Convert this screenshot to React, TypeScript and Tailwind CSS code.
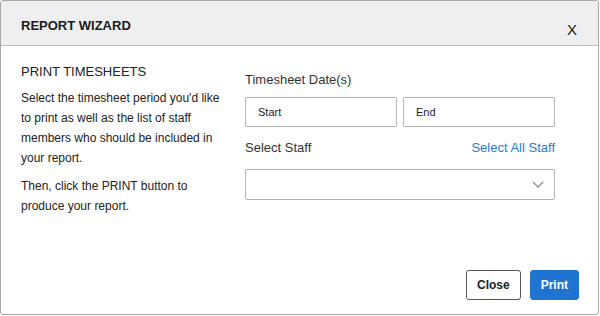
import React from 'react';

const font = { fontFamily: '"Liberation Sans", Arial, sans-serif' };

const DateBox: React.FC<{ label: string }> = ({ label }) => (
  <div className="flex-1 h-[30px] border border-[#b4b4b4] rounded-[2px] flex items-center pl-[12px] text-[11px] text-[#222]">
    {label}
  </div>
);

const App: React.FC = () => {
  return (
    <div className="w-[600px] h-[316px] bg-white" style={font}>
      <div className="w-[599px] h-[315px] border border-[#a9a9a9] rounded-[3px] flex flex-col overflow-hidden">
        {/* Header */}
        <div className="h-[45px] bg-[#efeff1] border-b border-[#bcbcbc] flex items-start justify-between pl-[20px] pr-[21px] pt-[17px] shrink-0">
          <span className="text-[13px] leading-[15px] font-bold text-[#1a1a1a]">REPORT WIZARD</span>
          <span className="text-[15px] leading-[17px] text-[#222] mt-[3px]">X</span>
        </div>

        {/* Body */}
        <div className="flex flex-1 pl-[20px] pr-[43px]">
          <div className="w-[202px] pt-[18px]">
            <h2 className="text-[13px] leading-[15px] text-[#222] mb-[9px]">PRINT TIMESHEETS</h2>
            <p className="text-[12px] leading-[20px] text-[#222] mb-[8px]">
              Select the timesheet period you'd like to print as well as the list of staff members who should be included in your report.
            </p>
            <p className="text-[12px] leading-[20px] text-[#222]">
              Then, click the PRINT button to produce your report.
            </p>
          </div>

          <div className="ml-auto w-[310px] pt-[26px]">
            <div className="text-[13px] leading-[15px] text-[#333] mb-[10px]">Timesheet Date(s)</div>
            <div className="flex gap-[6px]">
              <DateBox label="Start" />
              <DateBox label="End" />
            </div>
            <div className="flex justify-between mt-[13px] mb-[14px] text-[13px] leading-[15px]">
              <span className="text-[#333]">Select Staff</span>
              <span className="text-[#2b7bd7]">Select All Staff</span>
            </div>
            <div className="h-[31px] border border-[#b4b4b4] rounded-[2px] flex items-center justify-end pr-[10px]">
              <svg width="12" height="7" viewBox="0 0 12 7" fill="none">
                <path d="M1 1l5 5 5-5" stroke="#8a8a8a" strokeWidth="1.3" />
              </svg>
            </div>
          </div>
        </div>

        {/* Footer */}
        <div className="flex justify-end gap-[9px] pr-[19px] pb-[14px]">
          <button className="h-[30px] px-[10px] border border-[#555] rounded-[3px] bg-white text-[12px] font-bold text-[#222]">
            Close
          </button>
          <button className="h-[30px] px-[10px] border border-[#1f74d0] rounded-[3px] bg-[#1f74d0] text-[12px] font-bold text-white">
            Print
          </button>
        </div>
      </div>
    </div>
  );
};

export default App;
